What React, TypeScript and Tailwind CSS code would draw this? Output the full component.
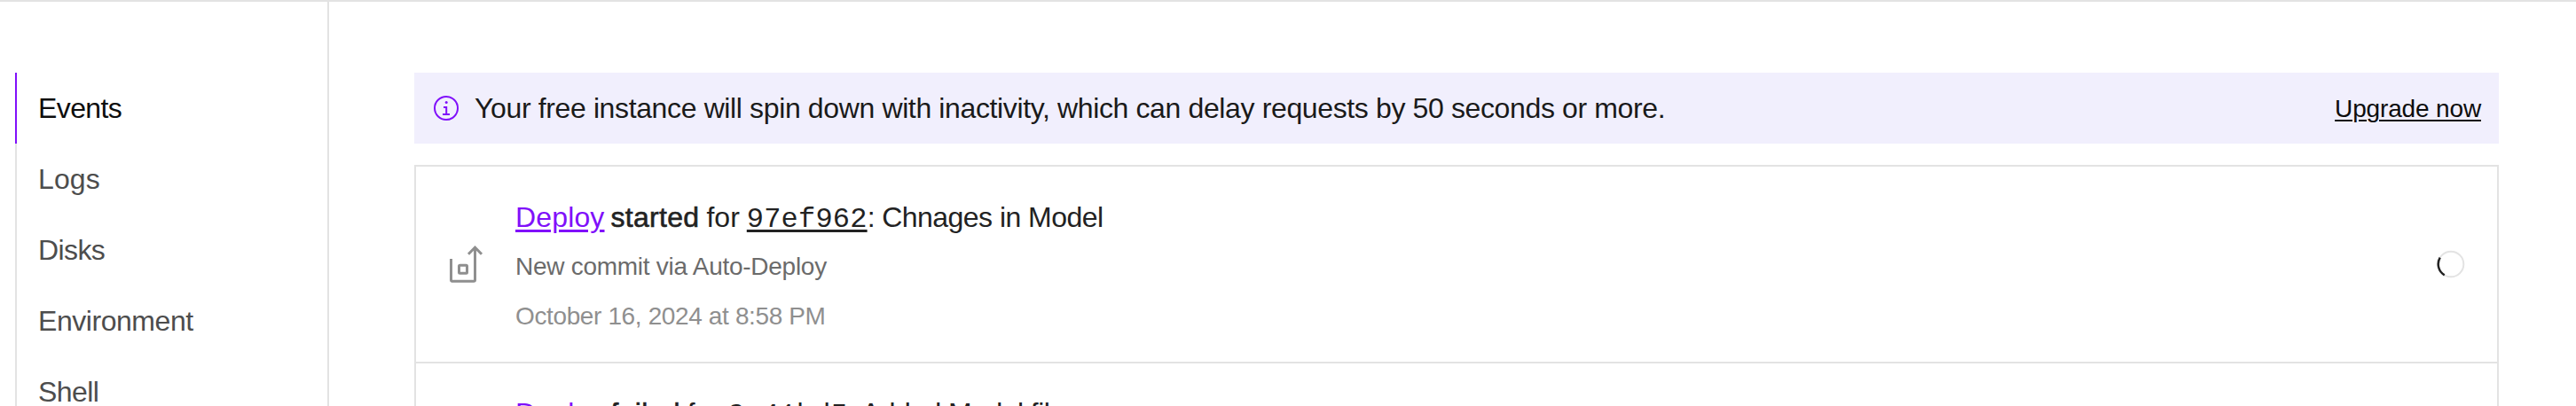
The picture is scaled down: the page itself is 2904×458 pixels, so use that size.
import React from "react";

const navItems = [
  { label: "Events", tracking: "tracking-[-0.6px]" },
  { label: "Logs", tracking: "tracking-[0.1px]" },
  { label: "Disks", tracking: "tracking-[-0.6px]" },
  { label: "Environment", tracking: "tracking-[-0.45px]" },
  { label: "Shell", tracking: "tracking-[-0.6px]" },
];

function InfoIcon() {
  return (
    <svg width="28" height="28" viewBox="0 0 28 28" fill="none" stroke="#8010fa" strokeWidth="2">
      <circle cx="14" cy="14" r="13" />
      <path d="M11 13h3.200v8M10 21h8" />
      <circle cx="14.200" cy="7.400" r="1.500" fill="#8010fa" stroke="none" />
    </svg>
  );
}

function DeployIcon() {
  return (
    <svg width="38" height="44" viewBox="0 0 38 44" fill="none" stroke="#8f8f8f" strokeWidth="3">
      <path d="M1.500 16v23.700a1.500 1.500 0 0 0 1.500 1.500h24a1.500 1.500 0 0 0 1.500-1.500V3" />
      <path d="M21 10.700l7.500-7.500 7.500 7.500" />
      <rect x="10.500" y="23.300" width="9" height="9" rx="1" />
    </svg>
  );
}

function Spinner() {
  return (
    <svg width="32" height="32" viewBox="0 0 32 32" fill="none" strokeWidth="2">
      <circle cx="16" cy="16" r="14.300" stroke="#e3e3e3" />
      <path d="M3.700 8.700A14.300 14.300 0 0 0 8.700 28.300" stroke="#222" strokeWidth="2.500" />
    </svg>
  );
}

function EventTitle({ status, hash, message }: { status: string; hash: string; message: string }) {
  return (
    <div className="flex h-[48px] items-baseline whitespace-pre text-[32px] leading-[48px] text-[#222]">
      <a className="tracking-[0.15px] text-[#8010fa] underline decoration-[3px] underline-offset-[3px]">Deploy</a>
      <span className="ml-[7px] tracking-[0.3px] [-webkit-text-stroke:0.6px_#222]">{status}</span>
      <span className="ml-[8px]">for</span>
      <a className="ml-[8px] font-['Liberation_Mono',monospace] tracking-[0.2px] underline decoration-[3px] underline-offset-[3px]">
        {hash}
      </a>
      <span className="tracking-[-0.55px]">: {message}</span>
    </div>
  );
}

interface EventRowProps {
  status: string;
  hash: string;
  message: string;
  detail: string;
  time: string;
}

function EventRow({ status, hash, message, detail, time }: EventRowProps) {
  return (
    <div className="flex h-[222px] shrink-0 items-center border-b-2 border-[#e3e3e3] pl-[38px] pr-[36px]">
      <DeployIcon />
      <div className="ml-[36px] flex-1 pt-[5px]">
        <EventTitle status={status} hash={hash} message={message} />
        <div className="mt-[8px] h-[48px] text-[28px] leading-[48px] tracking-[-0.27px] text-[#6b6b6b]">{detail}</div>
        <div className="mt-[8px] h-[48px] text-[28px] leading-[48px] tracking-[-0.37px] text-[#8f8f8f]">{time}</div>
      </div>
      <Spinner />
    </div>
  );
}

export default function App() {
  return (
    <div className="flex h-[458px] w-[2904px] overflow-hidden border-t-2 border-[#e3e3e3] bg-white font-['Liberation_Sans',sans-serif]">
      <aside className="h-full w-[371px] shrink-0 border-r-2 border-[#e3e3e3] pl-[17px] pt-[80px]">
        <nav>
          {navItems.map((item, i) => (
            <a
              key={item.label}
              className={`flex h-[80px] items-center border-l-2 pl-[24px] text-[32px] ${item.tracking} ${
                i === 0 ? "border-[#8010fa] text-[#0d0d0d]" : "border-[#e3e3e3] text-[#4d4d4d]"
              }`}
            >
              {item.label}
            </a>
          ))}
        </nav>
      </aside>
      <main className="flex h-full flex-1 flex-col pl-[96px] pr-[87px] pt-[80px]">
        <div className="flex h-[80px] shrink-0 items-center bg-[#f1effd] pl-[22px] pr-[20px]">
          <InfoIcon />
          <span className="ml-[18px] flex-1 text-[32px] tracking-[-0.37px] text-[#1a1a1a]">
            Your free instance will spin down with inactivity, which can delay requests by 50 seconds or more.
          </span>
          <a className="pt-[2px] text-[28px] tracking-[-0.15px] text-[#0d0d0d] underline decoration-2 underline-offset-[3px]">
            Upgrade now
          </a>
        </div>
        <section className="mt-[24px] flex flex-col border-x-2 border-t-2 border-[#e3e3e3]">
          <EventRow
            status="started"
            hash="97ef962"
            message="Chnages in Model"
            detail="New commit via Auto-Deploy"
            time="October 16, 2024 at 8:58 PM"
          />
          <div className="shrink-0 pl-[112px] pt-[32px]">
            <EventTitle status="failed" hash="2e41bd5" message="Added Model file" />
          </div>
        </section>
      </main>
    </div>
  );
}
